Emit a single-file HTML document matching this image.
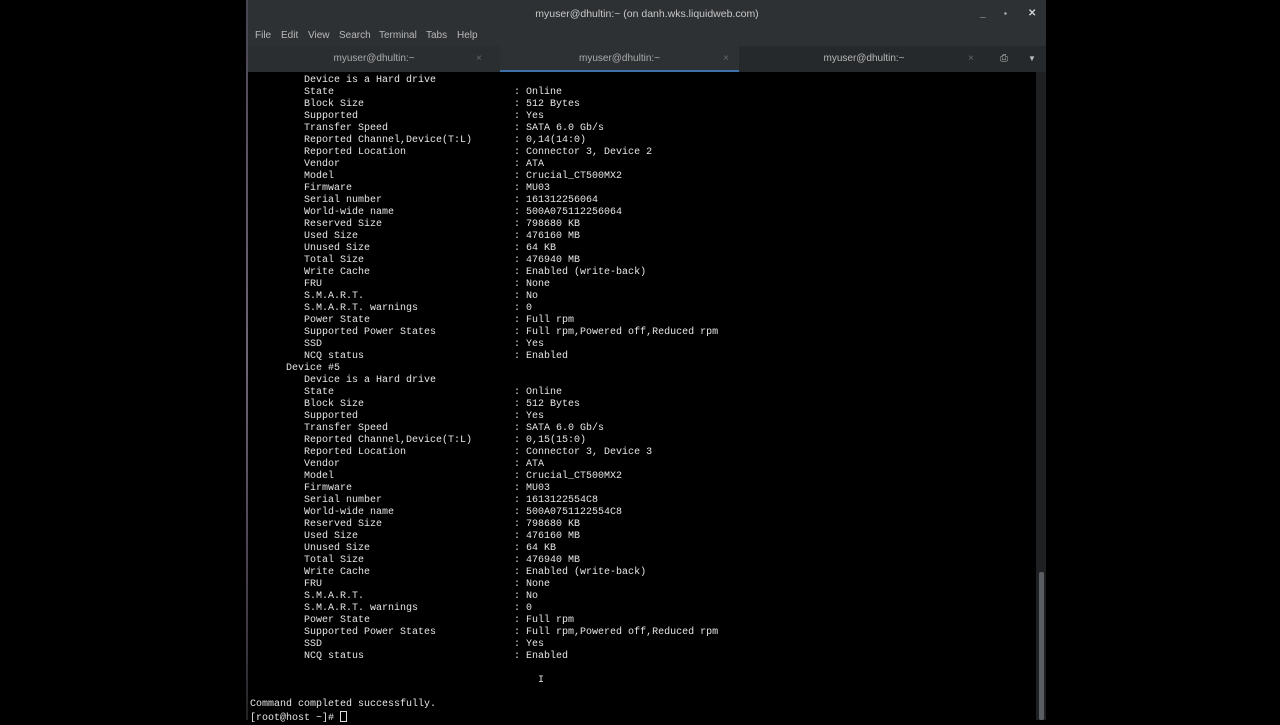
<!DOCTYPE html>
<html><head><meta charset="utf-8"><style>
*{margin:0;padding:0;box-sizing:border-box}
body{width:1280px;height:720px;background:#000;position:relative;overflow:hidden;font-family:"Liberation Sans",sans-serif}
.win{position:absolute;left:246px;top:0;width:800px;height:720px;background:#000}
.bl{position:absolute;left:246px;top:0;width:2px;height:720px;background:linear-gradient(#4a4552,#6d6478 50%,#3a3540 90%,#222)}
.title{position:absolute;left:248px;top:0;width:798px;height:28px;background:#2e3134;color:#c8c8c8;font-size:10.5px;text-align:center;line-height:28px}
.ctl{position:absolute;top:0;line-height:28px;color:#cfcfcf;font-size:10px;font-weight:bold}
.menu{position:absolute;left:248px;top:28px;width:798px;height:18px;background:#2e3134;color:#b8b8b8;font-size:10px;line-height:16px}
.menu span{position:absolute}
.tabs{position:absolute;left:248px;top:46px;width:798px;height:26px;background:#26292b}
.tab{position:absolute;top:0;height:26px;line-height:25px;text-align:center;font-size:10px;color:#aaa}
.x{position:absolute;top:0;line-height:25px;font-size:10px;color:#666}
pre{position:absolute;left:250px;top:75px;font-family:"Liberation Mono",monospace;font-size:10px;line-height:12px;color:#e6e6e6}
.sb{position:absolute;left:1036px;top:72px;width:10px;height:648px;background:#1e2022}
.th{position:absolute;left:1039px;top:572px;width:5px;height:148px;background:#5a5d62;border-radius:2px}
</style></head><body>
<div class="win"></div>
<div class="bl"></div>
<div class="title">myuser@dhultin:~ (on danh.wks.liquidweb.com)
<span class="ctl" style="left:732px">_</span><span class="ctl" style="left:756px;font-size:8px">▪</span><span class="ctl" style="left:780px">✕</span></div>
<div class="menu"><span style="left:7px">File</span><span style="left:33px">Edit</span><span style="left:60px">View</span><span style="left:91px">Search</span><span style="left:131px">Terminal</span><span style="left:178px">Tabs</span><span style="left:209px">Help</span></div>
<div class="tabs">
<div class="tab" style="left:0;width:252px;background:#2b2e31">myuser@dhultin:~</div><span class="x" style="left:228px">×</span>
<div class="tab" style="left:252px;width:239px;background:#2e3134;border-bottom:2px solid #3d6fa8">myuser@dhultin:~</div><span class="x" style="left:475px">×</span>
<div class="tab" style="left:491px;width:250px;color:#b8b8b8">myuser@dhultin:~</div><span class="x" style="left:720px">×</span>
<span class="x" style="left:752px;color:#bbb">⎙</span><span class="x" style="left:780px;color:#bbb;font-size:8px">▼</span>
</div>
<pre>         Device is a Hard drive
         State                              : Online
         Block Size                         : 512 Bytes
         Supported                          : Yes
         Transfer Speed                     : SATA 6.0 Gb/s
         Reported Channel,Device(T:L)       : 0,14(14:0)
         Reported Location                  : Connector 3, Device 2
         Vendor                             : ATA
         Model                              : Crucial_CT500MX2
         Firmware                           : MU03
         Serial number                      : 161312256064
         World-wide name                    : 500A075112256064
         Reserved Size                      : 798680 KB
         Used Size                          : 476160 MB
         Unused Size                        : 64 KB
         Total Size                         : 476940 MB
         Write Cache                        : Enabled (write-back)
         FRU                                : None
         S.M.A.R.T.                         : No
         S.M.A.R.T. warnings                : 0
         Power State                        : Full rpm
         Supported Power States             : Full rpm,Powered off,Reduced rpm
         SSD                                : Yes
         NCQ status                         : Enabled
      Device #5
         Device is a Hard drive
         State                              : Online
         Block Size                         : 512 Bytes
         Supported                          : Yes
         Transfer Speed                     : SATA 6.0 Gb/s
         Reported Channel,Device(T:L)       : 0,15(15:0)
         Reported Location                  : Connector 3, Device 3
         Vendor                             : ATA
         Model                              : Crucial_CT500MX2
         Firmware                           : MU03
         Serial number                      : 1613122554C8
         World-wide name                    : 500A0751122554C8
         Reserved Size                      : 798680 KB
         Used Size                          : 476160 MB
         Unused Size                        : 64 KB
         Total Size                         : 476940 MB
         Write Cache                        : Enabled (write-back)
         FRU                                : None
         S.M.A.R.T.                         : No
         S.M.A.R.T. warnings                : 0
         Power State                        : Full rpm
         Supported Power States             : Full rpm,Powered off,Reduced rpm
         SSD                                : Yes
         NCQ status                         : Enabled

                                                I

Command completed successfully.
[root@host ~]# <span style="display:inline-block;width:7px;height:11px;border:1px solid #ddd;vertical-align:-2px"></span></pre>
<div class="sb"></div><div class="th"></div>
</body></html>
